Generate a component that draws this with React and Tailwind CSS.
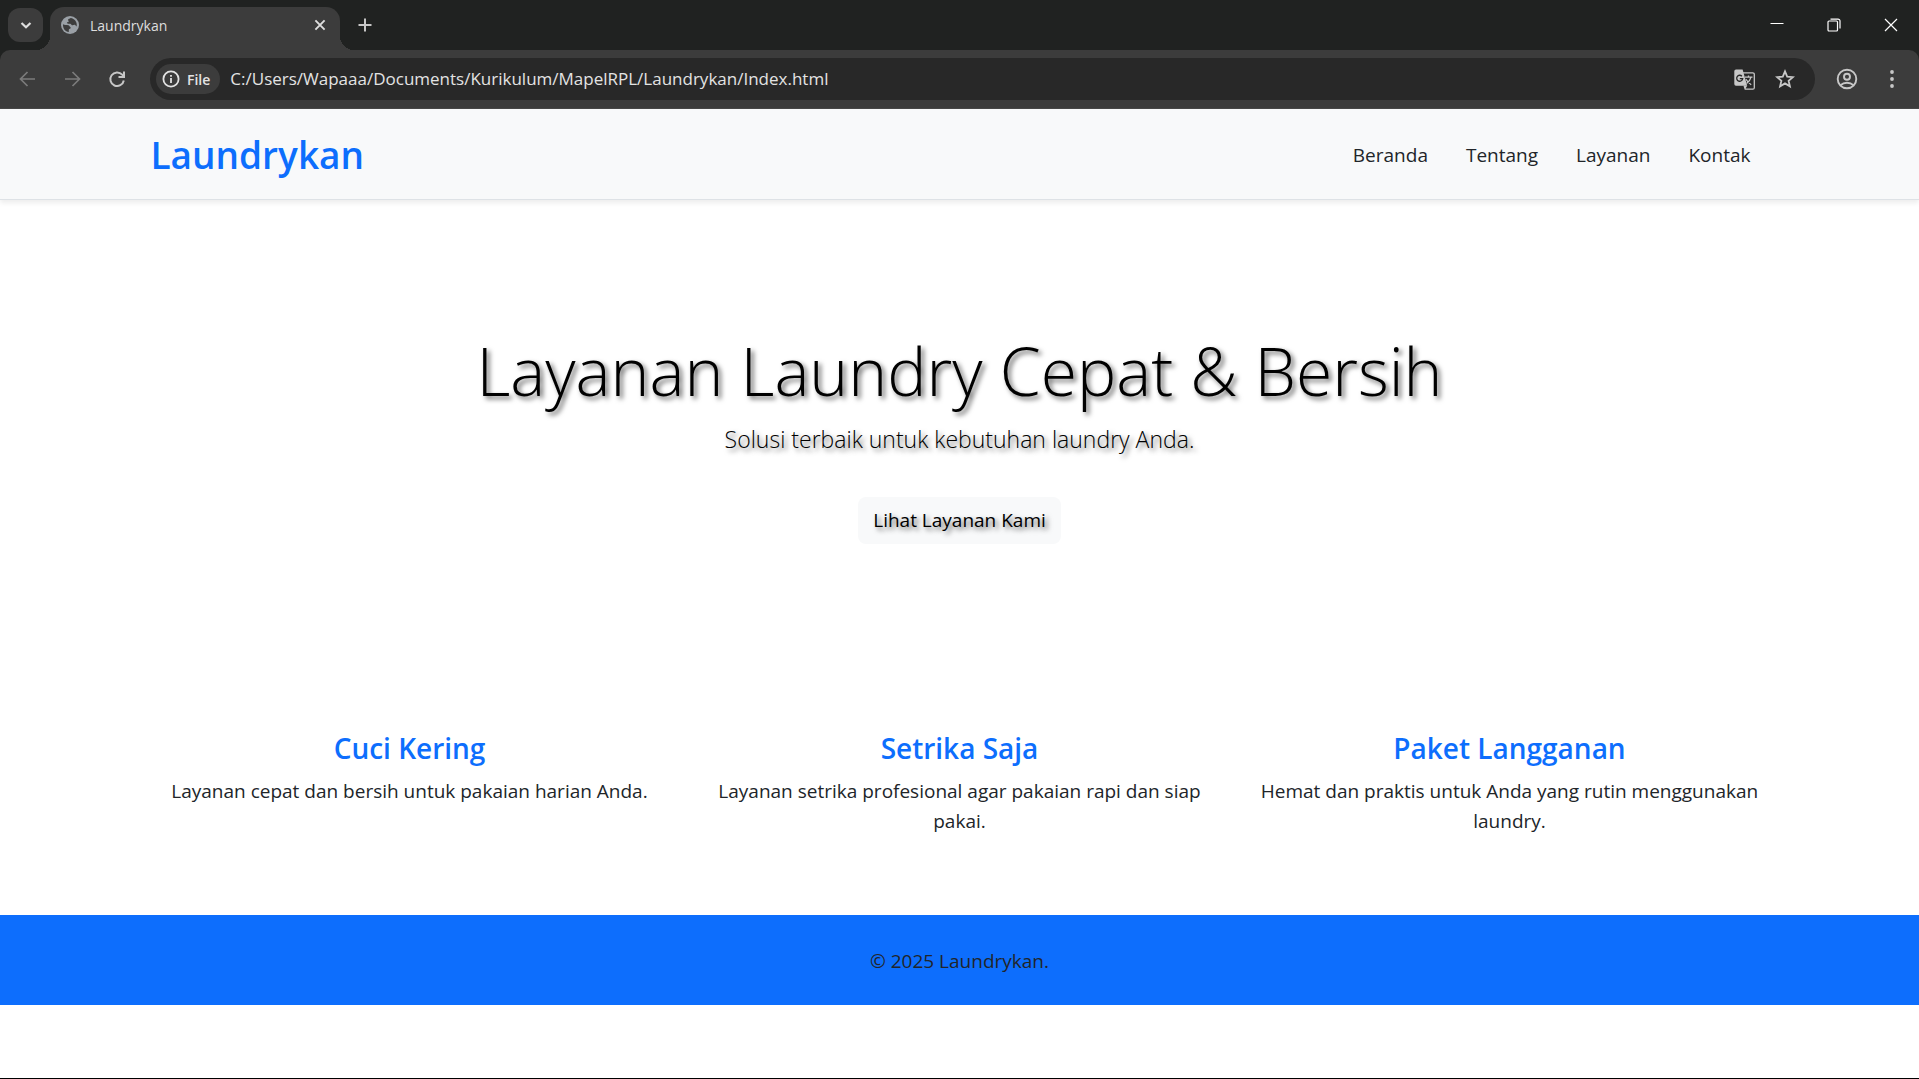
import React from "react";

const NAV = ["Beranda", "Tentang", "Layanan", "Kontak"];

const SERVICES = [
  { title: "Cuci Kering", text: "Layanan cepat dan bersih untuk pakaian harian Anda." },
  { title: "Setrika Saja", text: "Layanan setrika profesional agar pakaian rapi dan siap pakai." },
  { title: "Paket Langganan", text: "Hemat dan praktis untuk Anda yang rutin menggunakan laundry." },
];

function Icon({ size = 20, width = 2, children, viewBox = "0 0 20 20" }) {
  return (
    <svg width={size} height={size} viewBox={viewBox} fill="none" stroke="currentColor" strokeWidth={width} aria-hidden="true">
      {children}
    </svg>
  );
}

function TabStrip() {
  return (
    <div className="flex h-[50px] items-end bg-[#202221] pl-2 text-[#dedede]">
      <button aria-label="Cari tab" className="mb-2 flex h-[34px] w-[35px] items-center justify-center rounded-xl bg-[#3c3c3c]">
        <Icon size={20} width={2.2}>
          <path d="M5.5 8 10 12.3 14.5 8" />
        </Icon>
      </button>
      <div className="relative ml-[7px] flex h-[43px] w-[290px] items-center rounded-t-[14px] bg-[#3c3c3c] px-[11px] pb-[7px]">
        <span className="absolute bottom-0 -left-[14px] size-[14px] bg-[radial-gradient(circle_at_top_left,transparent_14px,#3c3c3c_14px)]" />
        <span className="absolute -right-[14px] bottom-0 size-[14px] bg-[radial-gradient(circle_at_top_right,transparent_14px,#3c3c3c_14px)]" />
        <svg width="18" height="18" viewBox="0 0 18 18" aria-hidden="true">
          <circle cx="9" cy="9" r="9" fill="#9aa0a6" />
          <path d="M2 8.2c1.4 1.2 3.6.6 5.4 1 .9.3 1 1.2 1.9 1.7.7.5.4 1.6-.4 1.8-.9.2-1.1.9-1.1 1.7v1.5C4.3 15.6 1.7 12.6 2 8.2ZM9.6 2.1c-.6.8-2.3.5-2.5 1.7-.2 1 .9 1.2.5 2-.5.8-1.8.4-1.7 1.3.1 1 2.1.5 3.3.6 1 .1 1.1 1.3 2 1.5 1.1.2 1.7-.7 2.6-.4 1 .3.8 1.5 1.9 1.6.7-4.2-2-7.8-6.1-8.3Z" fill="#3c3c3c" />
        </svg>
        <span className="ml-[11px] grow text-[14px]">Laundrykan</span>
        <button aria-label="Tutup tab">
          <Icon size={18} width={1.9} viewBox="0 0 18 18">
            <path d="m4.4 4.4 9.2 9.2M13.6 4.4l-9.2 9.2" />
          </Icon>
        </button>
      </div>
      <button aria-label="Tab baru" className="mb-[15px] ml-[15px] text-[#c7c7c7]">
        <Icon>
          <path d="M10 3.500v13M3.500 10h13" />
        </Icon>
      </button>
      <div className="ml-auto flex h-full w-[149px] items-center justify-between pr-[21px] text-white">
        <button aria-label="Minimalkan">
          <Icon size={14} width={1} viewBox="0 0 14 14">
            <path d="M.5 5.500h13" />
          </Icon>
        </button>
        <button aria-label="Pulihkan">
          <Icon size={14} width={1.2} viewBox="0 0 14 14">
            <rect x="1" y="3" width="9.5" height="10" rx="1" />
            <path d="M3.5 1.1h7.5a2 2 0 0 1 2 2v7.4" />
          </Icon>
        </button>
        <button aria-label="Tutup">
          <Icon size={14} width={1.2} viewBox="0 0 14 14">
            <path d="m1 1 12 12M13 1 1 13" />
          </Icon>
        </button>
      </div>
    </div>
  );
}

function Toolbar() {
  return (
    <div className="bg-[#202221]">
      <div className="flex h-[59px] items-center rounded-t-[10px] border-b border-[#484848] bg-[#3c3c3c] px-[17px] text-[#c7c7c7]">
        <button aria-label="Kembali" className="text-[#7b7b7b]">
          <Icon width={1.7}><path d="M18 10H3.500M10.500 3 3.500 10l7 7" /></Icon>
        </button>
        <button aria-label="Maju" className="ml-[26px] text-[#7b7b7b]">
          <Icon width={1.7}><path d="M2 10h14.500M9.500 3l7 7-7 7" /></Icon>
        </button>
        <button aria-label="Muat ulang" className="ml-[24px]">
          <Icon>
            <path d="M16.8 11.5a6.8 6.8 0 1 1-1.6-5.8l1.5 1.700" />
            <path d="M17 2.500v5.400h-5.500" />
          </Icon>
        </button>
        <div className="ml-[23px] flex h-[42px] grow items-center rounded-full bg-[#282828] pr-5 pl-1.5">
          <button className="flex h-[30px] items-center gap-[7px] rounded-full bg-[#3c3c3c] pr-[10px] pl-[6px] text-[14px] font-semibold text-[#e3e3e3]">
            <Icon size={18} width={1.8} viewBox="0 0 18 18">
              <circle cx="9" cy="9" r="7.6" />
              <path d="M9 8v5M9 5v1.800" />
            </Icon>
            File
          </button>
          <input
            aria-label="Alamat"
            className="ml-[10px] min-w-0 grow bg-transparent text-[17px] text-[#e3e3e3] outline-none"
            defaultValue="C:/Users/Wapaaa/Documents/Kurikulum/MapelRPL/Laundrykan/Index.html"
          />
          <button aria-label="Terjemahkan halaman ini">
            <svg width="21" height="21" viewBox="0 0 21 21" aria-hidden="true">
              <path d="M2 .5h6.6l4.6 16.3H2A1.7 1.7 0 0 1 .3 15.1V2.2A1.7 1.7 0 0 1 2 .5Z" fill="#c7c7c7" />
              <path d="M8 3.8h10.8a1.5 1.5 0 0 1 1.5 1.5v13.4a1.5 1.5 0 0 1-1.5 1.5h-7.6l-1.1-3.6" fill="none" stroke="#c7c7c7" strokeWidth="1.3" />
              <path d="m11.2 20 2-3.2h-3Z" fill="#c7c7c7" />
              <path d="M7.9 7.2A3 3 0 1 0 8.7 9.6H5.8" fill="none" stroke="#282828" strokeWidth="1.3" />
              <path d="M11 8.2h7.5M14.5 6.5v1.7M17 8.2c-.6 2.6-2.3 4.8-4.4 6.3M12 10.2c1 2 3 4 5.2 5.5" fill="none" stroke="#c7c7c7" strokeWidth="1.3" />
            </svg>
          </button>
          <button aria-label="Tandai halaman ini" className="ml-[20px]">
            <Icon width={1.8}>
              <path d="m10 2.4 2.2 5.2 5.7.5-4.3 3.7 1.3 5.5-4.9-2.9-4.9 2.9 1.3-5.5L2.1 8.1l5.7-.5Z" />
            </Icon>
          </button>
        </div>
        <button aria-label="Profil" className="ml-[21px]">
          <Icon size={22} width={1.9} viewBox="0 0 22 22">
            <circle cx="11" cy="11" r="9.3" />
            <circle cx="11" cy="8.8" r="3" />
            <path d="M4.5 17.2c3.6-3.2 9.4-3.2 13 0" />
          </Icon>
        </button>
        <button aria-label="Menu" className="ml-[24px]">
          <svg width="20" height="20" viewBox="0 0 20 20" fill="currentColor" aria-hidden="true">
            <circle cx="10" cy="3" r="1.9" />
            <circle cx="10" cy="10" r="1.9" />
            <circle cx="10" cy="17" r="1.9" />
          </svg>
        </button>
      </div>
    </div>
  );
}

export default function App() {
  return (
    <div className="flex min-h-screen flex-col border-b border-black bg-white font-['Open_Sans','Noto_Sans',sans-serif] text-[#212529]">
      <TabStrip />
      <Toolbar />

      <header className="border-b border-[#dee2e6] bg-[#f8f9fa] shadow-[0_3px_5px_rgba(0,0,0,0.075)]">
        <div className="mx-auto flex h-[90px] max-w-[1650px] items-center justify-between px-4 pt-0.5">
          <a href="#beranda" className="text-[37px] font-semibold text-[#0d6efd]">Laundrykan</a>
          <nav className="flex gap-[38px] pr-[18px] text-[19px]">
            {NAV.map((item) => (
              <a key={item} href={"#" + item.toLowerCase()}>{item}</a>
            ))}
          </nav>
        </div>
      </header>

      <main>
        <section className="flex flex-col items-center pt-[128px] pb-[125px] text-center text-black [text-shadow:3px_3px_5px_rgba(0,0,0,0.6)]">
          <h1 className="text-[66px] leading-[84px] font-light">Layanan Laundry Cepat &amp; Bersih</h1>
          <p className="mt-2 text-[23px] leading-[38px] font-light">Solusi terbaik untuk kebutuhan laundry Anda.</p>
          <a href="#layanan" className="mt-[39px] rounded-lg bg-[#f8f9fa] px-[15px] py-2 text-[19px] leading-[31px]">Lihat Layanan Kami</a>
        </section>

        <section className="mx-auto grid max-w-[1650px] grid-cols-3 pt-[61px] pb-[79px] text-center">
          {SERVICES.map((s) => (
            <article key={s.title} className="px-5">
              <h2 className="text-[28px] leading-[36px] font-semibold text-[#0d6efd]">{s.title}</h2>
              <p className="mt-[10px] text-[19px] leading-[30px]">{s.text}</p>
            </article>
          ))}
        </section>
      </main>

      <footer className="bg-[#0d6efd] pt-[31px] pb-[29px] text-center text-[19px] leading-[30px]">
        © 2025 Laundrykan.
      </footer>
    </div>
  );
}
